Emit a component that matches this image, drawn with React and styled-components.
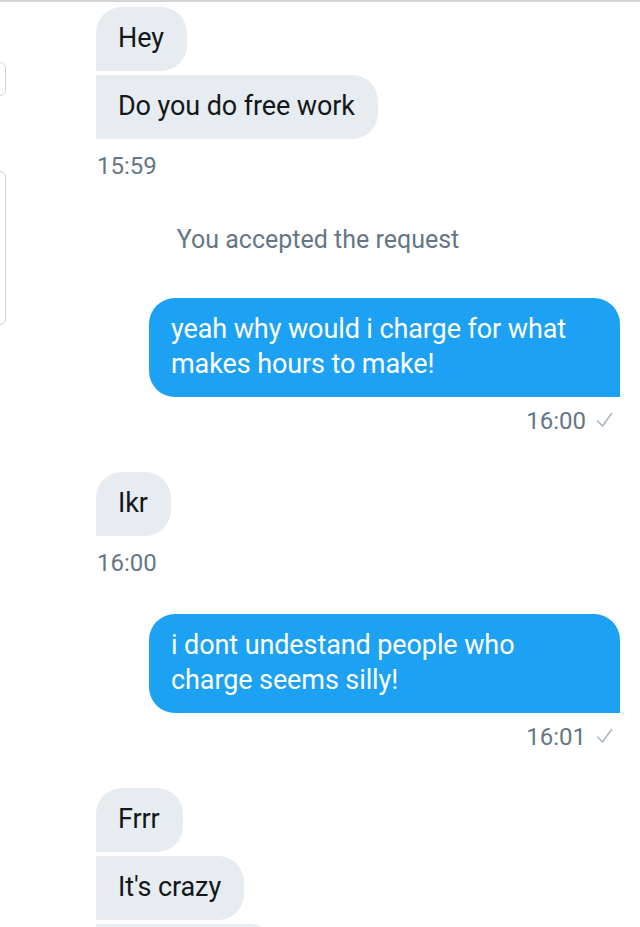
import styled, { createGlobalStyle } from 'styled-components';

const GlobalStyle = createGlobalStyle`
  html, body {
    margin: 0;
    padding: 0;
    background: #fff;
  }
  body {
    font-family: Roboto, "Noto Sans", "Liberation Sans", sans-serif;
    -webkit-font-smoothing: antialiased;
  }
`;

const conversation = [
  { type: 'in', texts: ['Hey', 'Do you do free work'], time: '15:59' },
  { type: 'notice', text: 'You accepted the request' },
  { type: 'out', texts: ['yeah why would i charge for what makes hours to make!'], time: '16:00' },
  { type: 'in', texts: ['Ikr'], time: '16:00' },
  { type: 'out', texts: ['i dont undestand people who charge seems silly!'], time: '16:01' },
  { type: 'in', texts: ['Frrr', "It's crazy"], more: true },
];

const Check = () => (
  <svg width="17" height="16" viewBox="0 0 17 16" fill="none">
    <polyline points="1.5,9 6.5,14 15.5,1.5" stroke="#aab8c2" strokeWidth="1.6" strokeLinecap="round" strokeLinejoin="round" />
  </svg>
);

const App = () => {
  return (
    <Screen>
      <GlobalStyle />
      <EdgeTab $top={60} $height={34} />
      <EdgeTab $top={169} $height={154} />
      <Thread>
        {conversation.map((item, i) => {
          if (item.type === 'notice') {
            return <Notice key={i}>{item.text}</Notice>;
          }
          const mine = item.type === 'out';
          return (
            <Group key={i} $mine={mine}>
              {item.texts.map((t, j) => (
                <Bubble key={j} $mine={mine} $first={j === 0}>
                  {t}
                </Bubble>
              ))}
              {/* next message peeks in under the bottom edge */}
              {item.more && <PeekBubble aria-hidden="true" />}
              {item.time && (
                <Meta $mine={mine}>
                  <span>{item.time}</span>
                  {mine && <Check />}
                </Meta>
              )}
            </Group>
          );
        })}
      </Thread>
    </Screen>
  );
};

export default App;

const Screen = styled.div`
  position: relative;
  width: 640px;
  height: 927px;
  overflow: hidden;
  background: #fff;
  border-top: 2px solid #d2d4d6;
  box-sizing: border-box;
`;

const EdgeTab = styled.div`
  position: absolute;
  left: -4px;
  top: ${(p) => p.$top}px;
  width: 10px;
  height: ${(p) => p.$height}px;
  border: 1.5px solid #cfd1d3;
  border-radius: 0 6px 6px 0;
  box-sizing: border-box;
`;

const Thread = styled.div`
  display: flex;
  flex-direction: column;
  padding: 5px 20px 0 96px;
`;

const Group = styled.div`
  display: flex;
  flex-direction: column;
  align-items: ${(p) => (p.$mine ? 'flex-end' : 'flex-start')};
  gap: 4px;
  margin-bottom: 37px;
`;

const Bubble = styled.div`
  box-sizing: border-box;
  max-width: 471px;
  padding: 14px 23px 15px 22px;
  font-size: 27px;
  line-height: 35px;
  letter-spacing: -0.1px;
  color: ${(p) => (p.$mine ? '#ffffff' : '#14171a')};
  background: ${(p) => (p.$mine ? '#1da1f2' : '#e6ecf0')};
  border-radius: ${(p) =>
    p.$mine ? '26px 26px 0 26px' : p.$first ? '26px 26px 26px 0' : '0 26px 26px 0'};
`;

const PeekBubble = styled.div`
  width: 180px;
  height: 64px;
  background: #e6ecf0;
  border-radius: 0 26px 26px 0;
`;

const Meta = styled.div`
  display: flex;
  align-items: center;
  gap: 10px;
  margin-top: ${(p) => (p.$mine ? '6px' : '9px')};
  padding: ${(p) => (p.$mine ? '0 7px 0 0' : '0 0 0 1px')};
  font-size: 24px;
  line-height: 28px;
  color: #657786;
  svg {
    margin-top: -2px;
  }
`;

const Notice = styled.div`
  margin: 9px -20px 44px -100px;
  text-align: center;
  font-size: 25px;
  line-height: 28px;
  color: #657786;
`;
